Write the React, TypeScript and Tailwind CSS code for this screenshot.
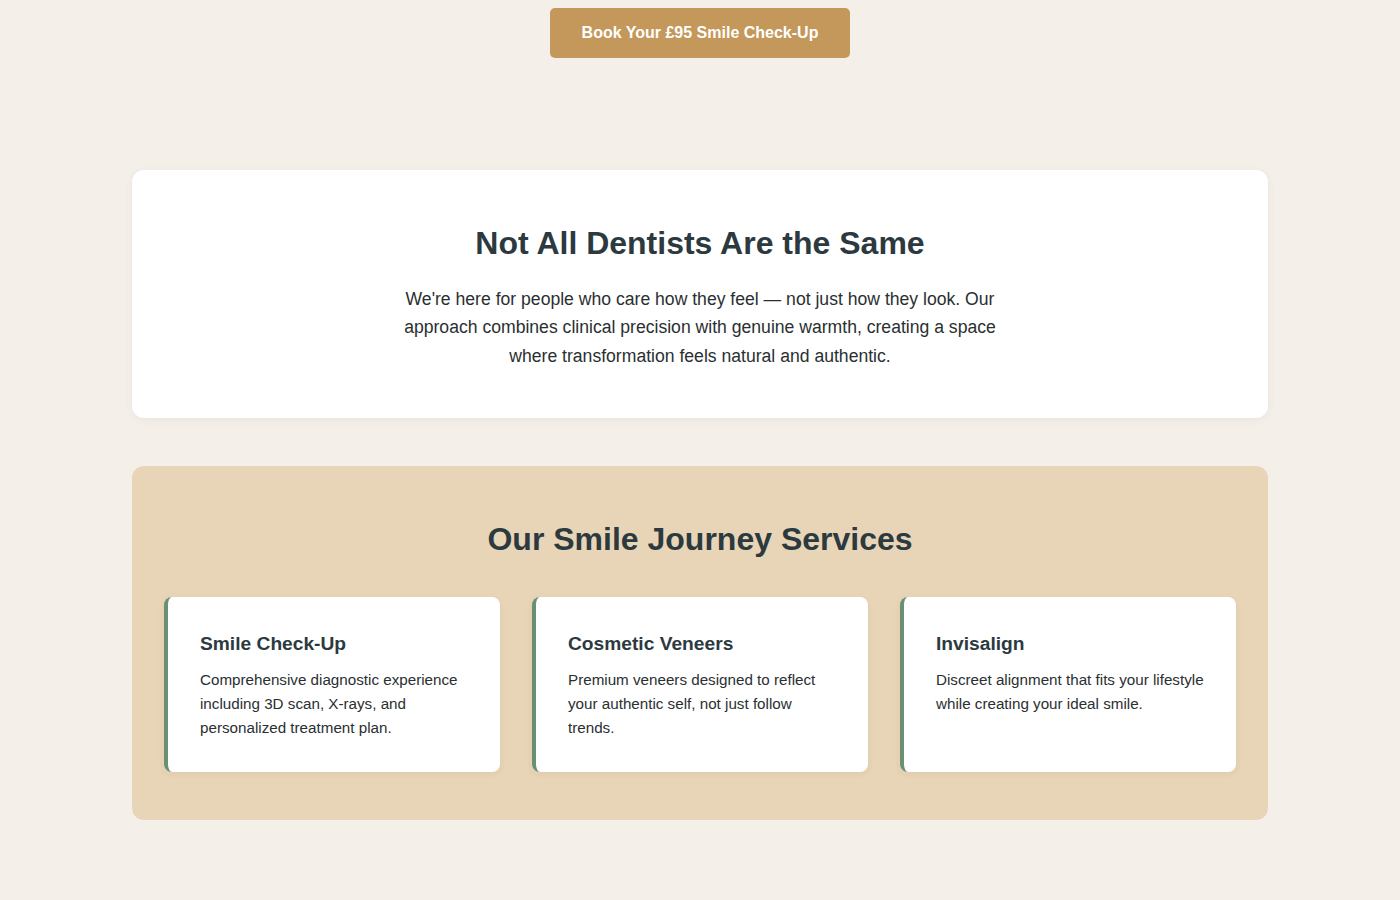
const services = [
  {
    title: "Smile Check-Up",
    text: "Comprehensive diagnostic experience including 3D scan, X-rays, and personalized treatment plan.",
  },
  {
    title: "Cosmetic Veneers",
    text: "Premium veneers designed to reflect your authentic self, not just follow trends.",
  },
  {
    title: "Invisalign",
    text: "Discreet alignment that fits your lifestyle while creating your ideal smile.",
  },
];

const App = () => {
  return (
    <div className="min-h-[900px] bg-[#f4f0e9] font-['Liberation_Sans',Arial,sans-serif] text-[#2c3a3f]">
      {/* CTA */}
      <div className="flex justify-center pt-2">
        <a
          href="#"
          className="flex h-[50px] w-[300px] items-center justify-center rounded-[5px] bg-[#c4975a] text-base font-bold text-white"
        >
          Book Your £95 Smile Check-Up
        </a>
      </div>

      <div className="mx-auto mt-[112px] flex w-[1136px] flex-col gap-12 pb-20">
        {/* INTRO */}
        <section className="h-[248px] rounded-xl bg-white px-12 pt-12 text-center shadow-[0_2px_10px_rgba(0,0,0,0.05)]">
          <h2 className="mb-[17px] text-[32px] font-bold leading-[50px]">Not All Dentists Are the Same</h2>
          <p className="mx-auto max-w-[600px] text-[17.6px] leading-[28.4px] text-[#2a2f31]">
            We're here for people who care how they feel — not just how they look. Our approach combines clinical precision with
            genuine warmth, creating a space where transformation feels natural and authentic.
          </p>
        </section>

        {/* SERVICES */}
        <section className="rounded-xl bg-[#e8d5b7] px-8 py-12">
          <h2 className="mb-[33px] text-center text-[32px] font-bold leading-[50px]">Our Smile Journey Services</h2>
          <div className="grid grid-cols-3 gap-8">
            {services.map((s) => (
              <div
                key={s.title}
                className="h-[175px] rounded-lg border-l-4 border-[#6b8f71] bg-white px-8 pt-[33px] shadow-[0_2px_8px_rgba(0,0,0,0.05)]"
              >
                <h3 className="mb-[10px] text-[19.2px] font-bold leading-7">{s.title}</h3>
                <p className="text-[15.2px] leading-6 text-[#2a2f31]">{s.text}</p>
              </div>
            ))}
          </div>
        </section>
      </div>
    </div>
  );
};

export default App;
